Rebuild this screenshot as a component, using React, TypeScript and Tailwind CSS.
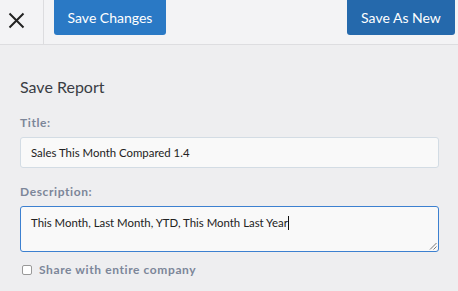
import React from "react";

export default function App() {
  return (
    <div className="w-[458px] h-[291px] bg-[#eeeef0] overflow-hidden" style={{ fontFamily: "Lato, 'Open Sans', sans-serif" }}>
      <div className="h-[45px] bg-[#f3f3f5] border-b border-[#dddde0] flex items-start">
        <div className="w-[44px] h-[44px] border-r border-[#dcdcdf] flex items-center justify-center">
          <svg width="17" height="17" viewBox="0 0 17 17" className="-mt-[3px] -ml-[10px]">
            <path d="M1.5 1.5 L15.5 15.5 M15.5 1.5 L1.5 15.5" stroke="#222" strokeWidth="2" />
          </svg>
        </div>
        <button className="ml-[10px] w-[112px] h-[35px] bg-[#2a79c5] text-white text-[14px] rounded-b-[3px] flex items-center justify-center">
          Save Changes
        </button>
        <div className="flex-1" />
        <button className="mr-[3px] w-[108px] h-[35px] bg-[#2569ac] text-white text-[14px] rounded-b-[3px] flex items-center justify-center">
          Save As New
        </button>
      </div>
      <div className="px-[20px] pt-[32px] w-[439px] box-content">
        <div className="text-[16px] leading-[20px] text-[#3a3d44]">Save Report</div>
        <div className="mt-[18px] text-[12px] leading-[15px] font-bold tracking-[0.6px] text-[#7c8699]">Title:</div>
        <div className="mt-[7px] w-[419px] h-[31px] bg-[#f9f9f9] border border-[#d3dce4] rounded-[3px] flex items-center px-[10px] text-[11.4px] text-[#222]">
          Sales This Month Compared 1.4
        </div>
        <div className="mt-[16px] text-[12px] leading-[15px] font-bold tracking-[0.6px] text-[#7c8699]">Description:</div>
        <div className="relative mt-[7px] w-[419px] h-[46px] bg-[#f9f9f9] border border-[#3c80d0] rounded-[3px] px-[10px] pt-[8px] text-[11.4px] leading-[16px] text-[#222]">
          <span>This Month, Last Month, YTD, This Month Last Year</span>
          <span className="inline-block w-[1px] h-[14px] bg-[#111] align-[-3px]" />
          <svg width="8" height="8" viewBox="0 0 8 8" className="absolute right-[1px] bottom-[1px]">
            <path d="M7.5 1 L1 7.5 M7.5 4.5 L4.5 7.5" stroke="#777" strokeWidth="1" />
          </svg>
        </div>
        <div className="mt-[9px] flex items-center">
          <div className="ml-[2px] w-[10px] h-[10px] border border-[#999] rounded-[2px] bg-white" />
          <span className="ml-[7px] text-[12px] font-bold tracking-[0.6px] text-[#7c8699]">Share with entire company</span>
        </div>
      </div>
    </div>
  );
}
